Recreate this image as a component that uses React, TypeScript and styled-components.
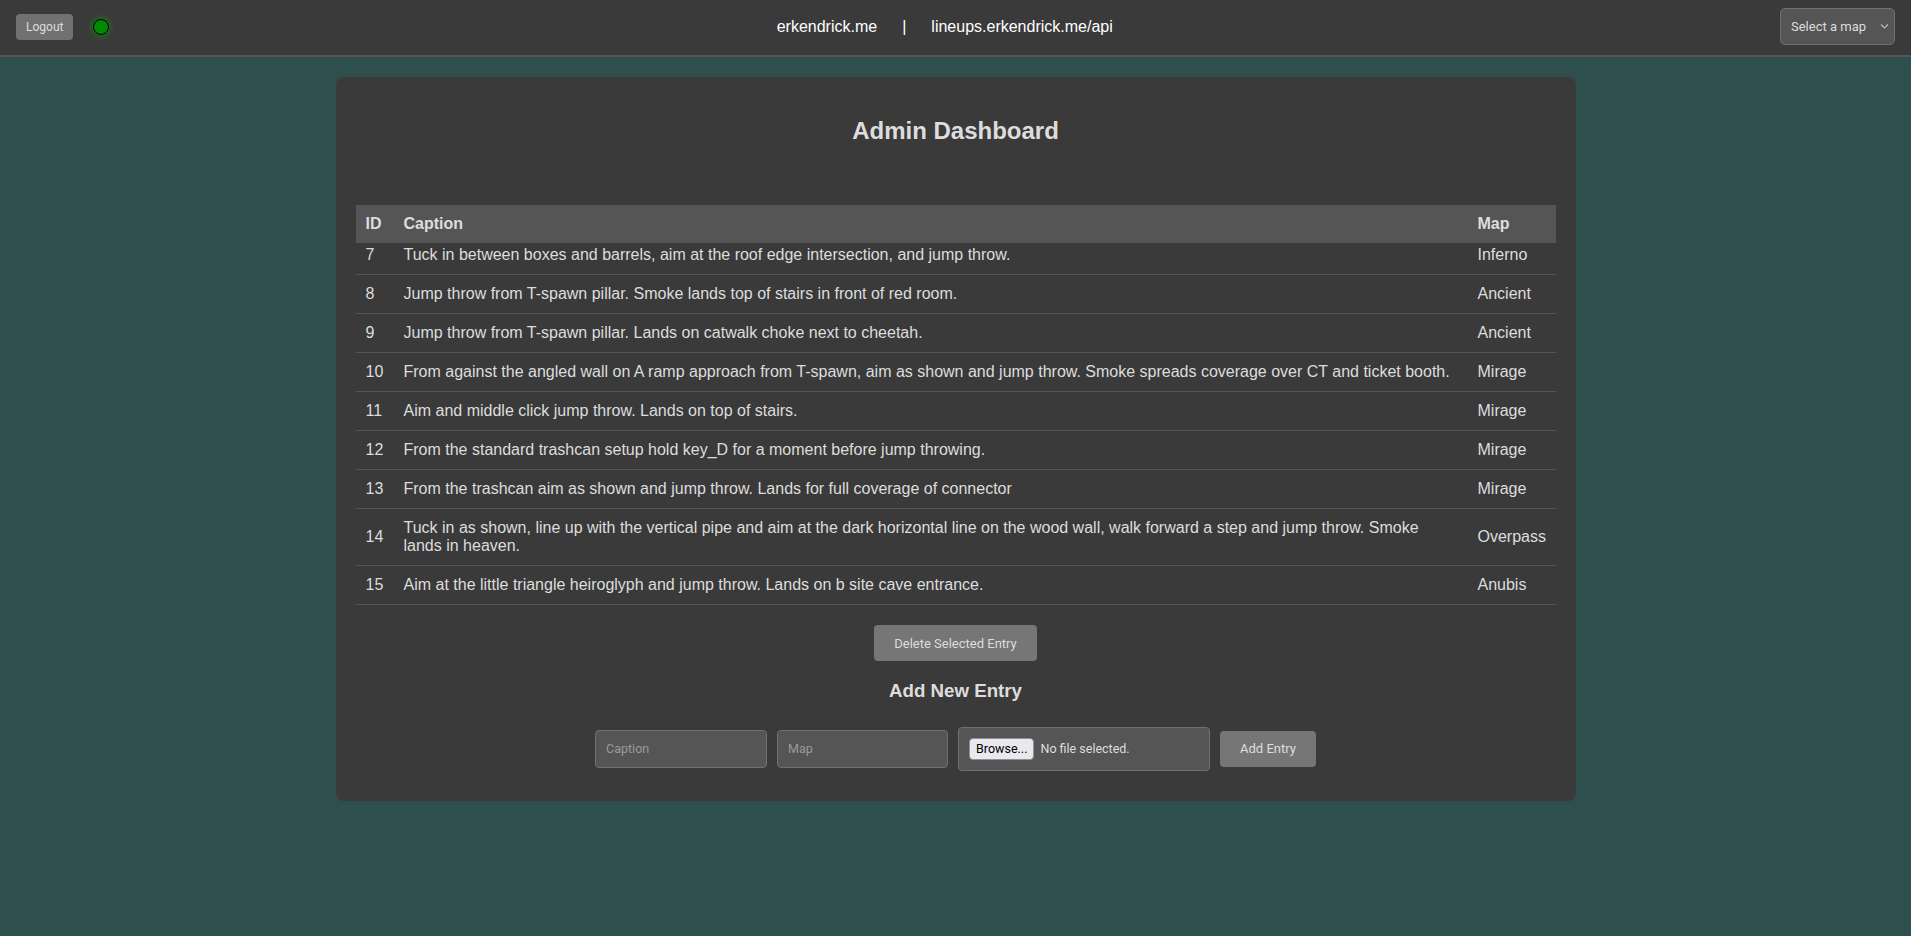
import React from "react";
import styled, { createGlobalStyle } from "styled-components";

const GlobalStyle = createGlobalStyle`
  html, body { margin: 0; padding: 0; }
  body {
    background: #2f4f4f;
    font-family: "Liberation Sans", Arial, sans-serif;
    color: #ddd;
    min-height: 100vh;
  }
  * { box-sizing: border-box; }
`;

const TopBar = styled.header`
  height: 57px;
  padding: 0 16px 2px;
  background: #3a3a3a;
  border-bottom: 2px solid #555;
  display: flex;
  align-items: center;
  justify-content: space-between;
`;

const LeftGroup = styled.div`
  display: flex;
  align-items: center;
  gap: 20px;
`;

const SmallButton = styled.button`
  height: 26px;
  padding: 0 10px;
  border: none;
  border-radius: 4px;
  background: #717171;
  color: #ddd;
  font-family: Roboto, "Segoe UI", sans-serif;
  font-size: 12px;
  cursor: pointer;
`;

const StatusDot = styled.span`
  width: 16px;
  height: 16px;
  border-radius: 50%;
  background: #008a00;
  border: 1px solid #000;
  box-shadow: 0 0 6px 1px rgba(0, 200, 0, 0.45);
`;

const NavLinks = styled.nav`
  display: flex;
  align-items: center;
  gap: 25px;
  font-size: 16px;
  color: #fff;
`;

const NavLink = styled.a`
  color: #fff;
  text-decoration: none;
`;

const SelectWrap = styled.div`
  position: relative;
  display: flex;
`;

const MapSelect = styled.select`
  appearance: none;
  width: 115px;
  height: 37px;
  padding: 0 10px;
  background: #555;
  border: 1px solid #707070;
  border-radius: 5px;
  color: #ddd;
  font-family: Roboto, "Segoe UI", sans-serif;
  font-size: 13px;
  outline: none;
`;

const Chevron = styled.svg`
  position: absolute;
  right: 6px;
  top: 15px;
  width: 9px;
  height: 7px;
  pointer-events: none;
`;

const Card = styled.main`
  max-width: 1240px;
  margin: 20px auto 0;
  padding: 20px;
  background: #3a3a3a;
  border-radius: 8px;
`;

const Title = styled.h2`
  margin: 20px 0 60px;
  font-size: 24px;
  font-weight: bold;
  text-align: center;
  color: #ddd;
`;

const Table = styled.table`
  width: 100%;
  border-collapse: collapse;
  table-layout: fixed;
  font-size: 16px;
`;

const Col = styled.col<{ $w: number }>`
  width: ${(p) => p.$w}px;
`;

const HeadCell = styled.th`
  background: #555;
  text-align: left;
  padding: 10px;
  font-weight: bold;
  color: #ddd;
  white-space: nowrap;
`;

const Cell = styled.td<{ $peek?: boolean }>`
  padding: ${(p) => (p.$peek ? "3px 10px 10px" : "10px")};
  border-bottom: 1px solid #555;
  vertical-align: middle;
  color: #ddd;
`;

const Actions = styled.div`
  display: flex;
  justify-content: center;
  margin-top: 20px;
`;

const ActionButton = styled.button`
  height: 36px;
  padding: 0 20px;
  border: none;
  border-radius: 4px;
  background: #767676;
  color: #ddd;
  font-family: Roboto, "Segoe UI", sans-serif;
  font-size: 13px;
  cursor: pointer;
`;

const SectionTitle = styled.h3`
  margin: 18.72px 0 25px;
  font-size: 18.72px;
  font-weight: bold;
  text-align: center;
  color: #ddd;
`;

const EntryForm = styled.form`
  display: flex;
  justify-content: center;
  align-items: center;
  gap: 10px;
  margin-bottom: 10px;
`;

const TextField = styled.input<{ $w: number }>`
  width: ${(p) => p.$w}px;
  height: 38px;
  padding: 0 10px;
  background: #555;
  border: 1px solid #707070;
  border-radius: 4px;
  color: #ddd;
  font-family: Roboto, "Segoe UI", sans-serif;
  font-size: 12.5px;
  outline: none;
  &::placeholder { color: #9a9a9a; }
`;

const FileField = styled.label`
  width: 252px;
  height: 44px;
  padding: 0 10px;
  background: #555;
  border: 1px solid #707070;
  border-radius: 4px;
  display: flex;
  align-items: center;
  gap: 6px;
  font-family: Roboto, "Segoe UI", sans-serif;
  font-size: 12.5px;
  color: #ddd;
`;

const BrowseButton = styled.span`
  height: 22px;
  padding: 0 6px;
  display: inline-flex;
  align-items: center;
  background: #e9e9ed;
  border: 1px solid #8f8f9d;
  border-radius: 4px;
  color: #000;
`;

const rows = [
  { id: 7, caption: "Tuck in between boxes and barrels, aim at the roof edge intersection, and jump throw.", map: "Inferno" },
  { id: 8, caption: "Jump throw from T-spawn pillar. Smoke lands top of stairs in front of red room.", map: "Ancient" },
  { id: 9, caption: "Jump throw from T-spawn pillar. Lands on catwalk choke next to cheetah.", map: "Ancient" },
  { id: 10, caption: "From against the angled wall on A ramp approach from T-spawn, aim as shown and jump throw. Smoke spreads coverage over CT and ticket booth.", map: "Mirage" },
  { id: 11, caption: "Aim and middle click jump throw. Lands on top of stairs.", map: "Mirage" },
  { id: 12, caption: "From the standard trashcan setup hold key_D for a moment before jump throwing.", map: "Mirage" },
  { id: 13, caption: "From the trashcan aim as shown and jump throw. Lands for full coverage of connector", map: "Mirage" },
  { id: 14, caption: "Tuck in as shown, line up with the vertical pipe and aim at the dark horizontal line on the wood wall, walk forward a step and jump throw. Smoke lands in heaven.", map: "Overpass" },
  { id: 15, caption: "Aim at the little triangle heiroglyph and jump throw. Lands on b site cave entrance.", map: "Anubis" },
];

export default function App() {
  return (
    <>
      <GlobalStyle />
      <TopBar>
        <LeftGroup>
          <SmallButton type="button">Logout</SmallButton>
          <StatusDot />
        </LeftGroup>
        <NavLinks>
          <NavLink href="#">erkendrick.me</NavLink>
          <span>|</span>
          <NavLink href="#">lineups.erkendrick.me/api</NavLink>
        </NavLinks>
        <SelectWrap>
          <MapSelect defaultValue="">
            <option value="">Select a map</option>
            <option>Ancient</option>
            <option>Anubis</option>
            <option>Inferno</option>
            <option>Mirage</option>
            <option>Overpass</option>
          </MapSelect>
          <Chevron viewBox="0 0 9 7" fill="none">
            <path d="M1 1.5 L4.5 5 L8 1.5" stroke="#bbb" strokeWidth="1.2" />
          </Chevron>
        </SelectWrap>
      </TopBar>

      <Card>
        <Title>Admin Dashboard</Title>
        <Table>
          <colgroup>
            <Col $w={38} />
            <col />
            <Col $w={88} />
          </colgroup>
          <thead>
            <tr>
              <HeadCell>ID</HeadCell>
              <HeadCell>Caption</HeadCell>
              <HeadCell>Map</HeadCell>
            </tr>
          </thead>
          <tbody>
            {rows.map((r, i) => (
              <tr key={r.id}>
                <Cell $peek={i === 0}>{r.id}</Cell>
                <Cell $peek={i === 0}>{r.caption}</Cell>
                <Cell $peek={i === 0}>{r.map}</Cell>
              </tr>
            ))}
          </tbody>
        </Table>
        <Actions>
          <ActionButton type="button">Delete Selected Entry</ActionButton>
        </Actions>
        <SectionTitle>Add New Entry</SectionTitle>
        <EntryForm onSubmit={(e) => e.preventDefault()}>
          <TextField $w={172} placeholder="Caption" />
          <TextField $w={171} placeholder="Map" />
          <FileField>
            <BrowseButton>Browse...</BrowseButton>
            <span>No file selected.</span>
          </FileField>
          <ActionButton type="submit">Add Entry</ActionButton>
        </EntryForm>
      </Card>
    </>
  );
}
